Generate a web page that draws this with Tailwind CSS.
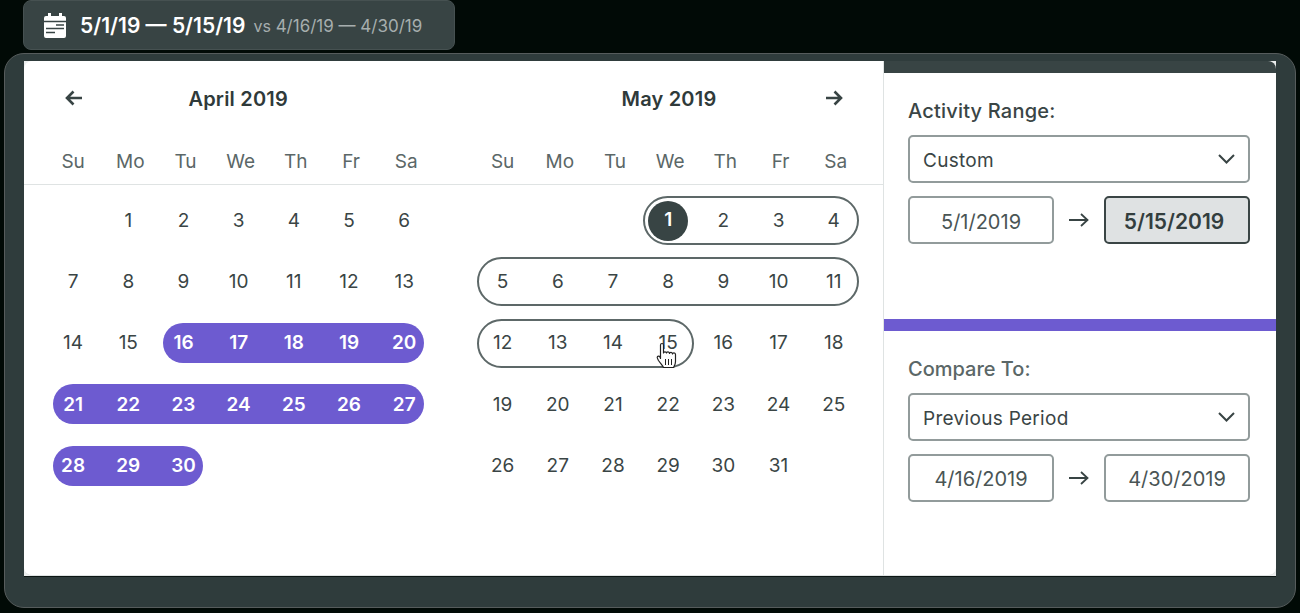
<!DOCTYPE html>
<html><head><meta charset="utf-8"><script src="https://cdn.jsdelivr.net/npm/@tailwindcss/browser@4"></script></head>
<body class="m-0 w-[1300px] h-[613px] overflow-hidden bg-[#010a06] font-['Inter',sans-serif] text-[#3a4545]">
<div class="ml-[23px] w-[432px] h-[50px] flex items-center pl-[20px] gap-[14px] bg-[#384444] border border-[#465151] rounded-[8px]">
  <svg width="22" height="26" viewBox="0 0 22 26" class="mt-[-1px]"><path fill="#fff" d="M4 1h3v3h8V1h3v3h2a2 2 0 0 1 2 2v18a2 2 0 0 1-2 2H2a2 2 0 0 1-2-2V6a2 2 0 0 1 2-2h2z"/><path stroke="#384444" stroke-width="1.6" d="M0 9.500h22M12 13h8M2 16.500h18M2 20.500h9"/></svg>
  <span class="text-[21px] leading-none font-semibold text-white pt-[1px]">5/1/19 — 5/15/19</span>
  <span class="text-[17px] leading-none text-[#a6aeae] ml-[-6px] pt-[3px]"><span class="text-[16px]">vs</span> 4/16/19 — 4/30/19</span>
</div>
<div class="mt-[3px] ml-[4px] w-[1292px] h-[555px] pt-[7px] pb-[32px] px-[19px] bg-[#2f3c3c] border border-[#565c5c] rounded-[20px]">
  <div class="w-[1252px] h-[515px] bg-[#eceeee] shadow-[0_1px_0_#0c1614]">
  <div class="h-full flex bg-white rounded-[8px] overflow-hidden border-b border-[#dfe3e3]">
    <div class="w-[859px] shrink-0">
      <div class="h-[124px] border-b border-[#dfe3e3] flex">
        <div class="w-[429.500px] pl-[21.500px]">
          <div class="w-[386.4px] h-[75px] flex items-center justify-between px-[20px] pt-[1px]">
            <svg class="mb-[3px] -ml-[1px]" width="18" height="16" viewBox="0 0 18 16" fill="none" stroke="#384444" stroke-width="2.600"><path d="M17 8H2M8.500 1.500 2 8l6.500 6.500"/></svg>
            <span class="text-[20px] tracking-[0.2px] font-semibold text-[#2f3a3a]">April 2019</span>
            <span class="w-[18px]"></span>
          </div>
          <div class="flex text-[19px] text-[#5b6767] h-[26px] mt-[13px] items-center text-center">
            <span class="w-[55.2px]">Su</span><span class="w-[55.2px] ml-[2px]">Mo</span><span class="w-[55.2px]">Tu</span><span class="w-[55.2px]">We</span><span class="w-[55.2px]">Th</span><span class="w-[55.2px]">Fr</span><span class="w-[55.2px]">Sa</span>
          </div>
        </div>
        <div class="w-[429.500px] pl-[21.500px]">
          <div class="w-[386.4px] h-[75px] flex items-center justify-between px-[20px] pt-[1px]">
            <span class="w-[18px]"></span>
            <span class="text-[20px] tracking-[0.2px] font-semibold text-[#2f3a3a]">May 2019</span>
            <svg class="mb-[3px] -mr-[1.500px]" width="18" height="16" viewBox="0 0 18 16" fill="none" stroke="#384444" stroke-width="2.600"><path d="M1 8h15M9.500 1.500 16 8l-6.500 6.500"/></svg>
          </div>
          <div class="flex text-[19px] text-[#5b6767] h-[26px] mt-[13px] items-center text-center">
            <span class="w-[55.2px]">Su</span><span class="w-[55.2px] ml-[2px]">Mo</span><span class="w-[55.2px]">Tu</span><span class="w-[55.2px]">We</span><span class="w-[55.2px]">Th</span><span class="w-[55.2px]">Fr</span><span class="w-[55.2px]">Sa</span>
          </div>
        </div>
      </div>
      <div class="flex pt-[5px] text-[19px] text-[#3a4545]">
        <!-- April -->
        <div class="w-[429.500px] pl-[21.500px] [&>div]:h-[61.25px] [&>div]:flex [&>div]:items-center [&_span]:w-[55.2px] [&_span]:text-center [&_span]:pt-[1px]">
          <div><span></span><span>1</span><span>2</span><span>3</span><span>4</span><span>5</span><span>6</span></div>
          <div><span>7</span><span>8</span><span>9</span><span>10</span><span>11</span><span>12</span><span>13</span></div>
          <div><span>14</span><span>15</span><b class="ml-[7.6px] h-10 rounded-full bg-[#6d5bd0] text-white font-semibold flex items-center"><i class="-mx-[7.6px] flex not-italic"><span>16</span><span>17</span><span>18</span><span>19</span><span>20</span></i></b></div>
          <div><b class="mx-[7.6px] h-10 rounded-full bg-[#6d5bd0] text-white font-semibold flex items-center"><i class="-mx-[7.6px] flex not-italic"><span>21</span><span>22</span><span>23</span><span>24</span><span>25</span><span>26</span><span>27</span></i></b></div>
          <div><b class="mx-[7.6px] h-10 rounded-full bg-[#6d5bd0] text-white font-semibold flex items-center"><i class="-mx-[7.6px] flex not-italic"><span>28</span><span>29</span><span>30</span></i></b></div>
        </div>
        <!-- May -->
        <div class="w-[429.500px] pl-[21.500px] [&>div]:h-[61.25px] [&>div]:flex [&>div]:items-center [&_span]:w-[55.2px] [&_span]:text-center [&_span]:pt-[1px]">
          <div><div class="w-[165.6px]"></div><b class="ml-[2px] h-[49px] rounded-full border-2 border-[#5d6868] font-normal flex items-center"><i class="-mx-[4px] flex items-center not-italic"><span class="flex justify-center !pt-0"><em class="not-italic w-10 h-10 rounded-full bg-[#384444] text-white font-semibold flex items-center justify-center">1</em></span><span>2</span><span>3</span><span>4</span></i></b></div>
          <div><b class="ml-[2px] h-[49px] rounded-full border-2 border-[#5d6868] font-normal flex items-center"><i class="-mx-[4px] flex not-italic"><span>5</span><span>6</span><span>7</span><span>8</span><span>9</span><span>10</span><span>11</span></i></b></div>
          <div><b class="ml-[2px] h-[49px] rounded-full border-2 border-[#5d6868] font-normal flex items-center"><i class="-mx-[4px] flex not-italic"><span>12</span><span>13</span><span>14</span><span>15</span></i></b><div class="ml-[2px] flex"><span>16</span><span>17</span><span>18</span></div></div>
          <div><span>19</span><span>20</span><span>21</span><span>22</span><span>23</span><span>24</span><span>25</span></div>
          <div><span>26</span><span>27</span><span>28</span><span>29</span><span>30</span><span>31</span></div>
        </div>
      </div>
    </div>
    <div class="flex-1 border-l border-[#dfe3e3]">
      <div class="h-[12px] bg-[#384444]"></div>
      <div class="h-[246px] pl-[24px] pt-[26px]">
        <div class="text-[20px] leading-[24px] font-medium tracking-[0.2px] text-[#3a4545]">Activity Range:</div>
        <div class="mt-[12px] h-[48px] w-[342px] border-2 border-[#929b9b] rounded-[5px] flex items-center justify-between pl-[13px] pr-[13px] text-[19px] tracking-[0.3px]"><span class="pt-[5px]">Custom</span><svg width="17" height="10" viewBox="0 0 17 10" fill="none" stroke="#384444" stroke-width="2"><path d="M1 1l7.500 7.500L16 1"/></svg></div>
        <div class="mt-[13px] w-[342px] flex items-center justify-between">
          <div class="w-[146px] h-[48px] pt-[3px] border-2 border-[#929b9b] rounded-[5px] flex items-center justify-center text-[20px] text-[#4a5555]">5/1/2019</div>
          <svg width="20" height="14" viewBox="0 0 20 14" fill="none" stroke="#384444" stroke-width="1.800"><path d="M0 7h18M12 1l6.500 6L12 13"/></svg>
          <div class="w-[146px] h-[48px] pt-[3px] pr-[6px] border-2 border-[#3a4545] bg-[#dfe2e3] rounded-[5px] flex items-center justify-center text-[21px] font-semibold text-[#333e3e]">5/15/2019</div>
        </div>
      </div>
      <div class="h-[12px] bg-[#6d5bd0]"></div>
      <div class="pl-[24px] pt-[26px]">
        <div class="text-[20px] leading-[24px] font-medium text-[#5b6767]">Compare To:</div>
        <div class="mt-[12px] h-[48px] w-[342px] border-2 border-[#929b9b] rounded-[5px] flex items-center justify-between pl-[13px] pr-[13px] text-[19px] tracking-[0.3px]"><span class="pt-[5px]">Previous Period</span><svg width="17" height="10" viewBox="0 0 17 10" fill="none" stroke="#384444" stroke-width="2"><path d="M1 1l7.500 7.500L16 1"/></svg></div>
        <div class="mt-[13px] w-[342px] flex items-center justify-between">
          <div class="w-[146px] h-[48px] pt-[2px] border-2 border-[#929b9b] rounded-[5px] flex items-center justify-center text-[20px] text-[#4a5555]">4/16/2019</div>
          <svg width="20" height="14" viewBox="0 0 20 14" fill="none" stroke="#384444" stroke-width="1.800"><path d="M0 7h18M12 1l6.500 6L12 13"/></svg>
          <div class="w-[146px] h-[48px] pt-[2px] border-2 border-[#929b9b] rounded-[5px] flex items-center justify-center text-[20px] text-[#4a5555]">4/30/2019</div>
        </div>
      </div>
    </div>
  </div>
  </div>
</div>
<svg class="absolute left-[654px] top-[342px]" width="27" height="30" viewBox="0 0 24 30"><path fill="#fff" stroke="#222" stroke-width="1.200" stroke-linejoin="round" d="M5 3c0-2 3-2 3 0v8c0-1.500 3-1.500 3 0 0-1.500 3-1.500 3 .5 0-1.500 3-1.500 3 .5 0-1.500 3-1.500 3 .5v7c0 3-1 4-2 6H8c-1-2-3-4-5-7-1-2-2-3-1-4s3 0 3 2z"/><path stroke="#222" d="M10 17v6M13 17v6M16 17v6"/></svg>
</body></html>
